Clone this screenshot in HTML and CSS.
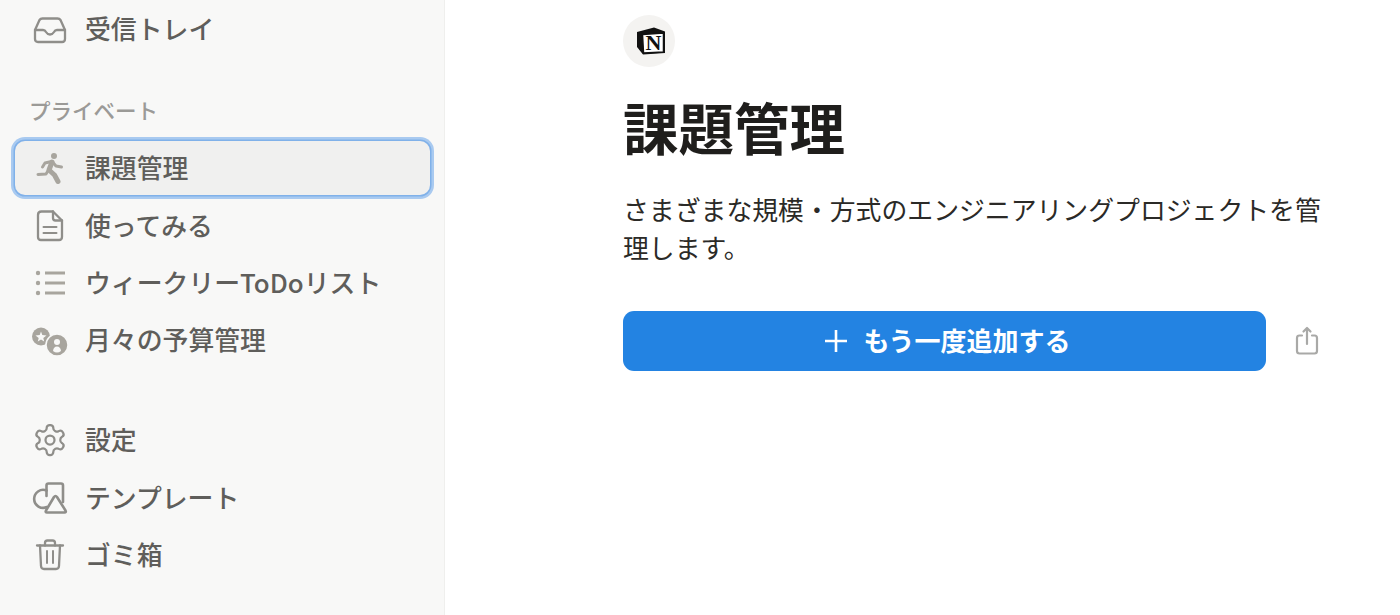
FILE: index.html
```html
<!DOCTYPE html>
<html lang="ja">

<head>
    <title>課題管理</title>
    <link rel="stylesheet" href="styles.css">
</head>

<body>
    <div class="page">
        <!-- Sidebar -->
        <aside class="sidebar">
            <a class="row">
                <svg class="icon" viewBox="0 0 36 36">
                    <path d="M3 19 L7.500 9 Q8.500 7.500 10.500 7.500 H25.500 Q27.500 7.500 28.500 9 L33 19 V28 Q33 31 30 31 H6 Q3 31 3 28 Z" />
                    <path d="M3 19 H11 Q13 19 14 21 Q15.500 23.500 18 23.500 Q20.500 23.500 22 21 Q23 19 25 19 H33" />
                </svg>
                <span>受信トレイ</span>
            </a>

            <div class="section-label">プライベート</div>

            <a class="row row-active">
                <svg class="icon icon-soft" viewBox="0 0 36 36">
                    <circle class="fill" cx="22" cy="6" r="3" />
                    <path class="thick" d="M20 12 L17 20 L22.500 25 L26 31.500" />
                    <path class="thin" d="M19.500 11.500 L13 13 L10.500 17" />
                    <path class="thin" d="M20.500 12 L24 16 L29.500 17" />
                    <path class="thin" d="M16.500 20 L14 24 L6 24.500" />
                </svg>
                <span>課題管理</span>
            </a>
            <a class="row">
                <svg class="icon" viewBox="0 0 36 36">
                    <path d="M6 7 Q6 3.500 9.500 3.500 H21 L30 12.500 V29 Q30 32 27 32 H9 Q6 32 6 29 Z" />
                    <path d="M21 3.500 V10 Q21 12.500 23.500 12.500 H30" />
                    <path class="line" d="M11.500 19 H24.500 M11.500 25 H24.500" />
                </svg>
                <span>使ってみる</span>
            </a>
            <a class="row">
                <svg class="icon icon-soft" viewBox="0 0 36 36">
                    <path class="list" d="M13 8 H33 M13 18 H33 M13 28 H33" />
                    <circle class="fill" cx="6" cy="8" r="2.200" />
                    <circle class="fill" cx="6" cy="18" r="2.200" />
                    <circle class="fill" cx="6" cy="28" r="2.200" />
                </svg>
                <span>ウィークリーToDoリスト</span>
            </a>
            <a class="row">
                <svg class="icon icon-soft" viewBox="0 0 36 36">
                    <circle class="fill" cx="9" cy="14.500" r="9" />
                    <path class="cut" d="M9 9.500 L10.300 13 L14.500 13.500 L11.300 16 L12.200 19.500 L9 17.500 L5.800 19.500 L6.700 16 L3.500 13.500 L7.700 13 Z" />
                    <circle class="fill ring" cx="25" cy="23" r="11" />
                    <circle class="cut" cx="25" cy="20" r="3" />
                    <path class="cut" d="M21 29 Q21.500 24.500 25 24.500 Q28.500 24.500 29 29 Q27 30.500 25 30.500 Q23 30.500 21 29 Z" />
                </svg>
                <span>月々の予算管理</span>
            </a>

            <div class="bottom-group">
                <a class="row">
                    <svg class="icon" viewBox="0 0 24 24">
                        <path class="gear" d="M12.220 2h-.44a2 2 0 0 0-2 2v.18a2 2 0 0 1-1 1.730l-.43.25a2 2 0 0 1-2 0l-.15-.08a2 2 0 0 0-2.730.73l-.22.38a2 2 0 0 0 .73 2.730l.15.1a2 2 0 0 1 1 1.720v.51a2 2 0 0 1-1 1.740l-.15.09a2 2 0 0 0-.73 2.730l.22.38a2 2 0 0 0 2.730.73l.15-.08a2 2 0 0 1 2 0l.43.25a2 2 0 0 1 1 1.730V20a2 2 0 0 0 2 2h.44a2 2 0 0 0 2-2v-.18a2 2 0 0 1 1-1.730l.43-.25a2 2 0 0 1 2 0l.15.08a2 2 0 0 0 2.730-.73l.22-.39a2 2 0 0 0-.73-2.730l-.15-.08a2 2 0 0 1-1-1.740v-.5a2 2 0 0 1 1-1.740l.15-.09a2 2 0 0 0 .73-2.730l-.22-.38a2 2 0 0 0-2.730-.73l-.15.08a2 2 0 0 1-2 0l-.43-.25a2 2 0 0 1-1-1.730V4a2 2 0 0 0-2-2z" />
                        <circle class="gear" cx="12" cy="12" r="3" />
                    </svg>
                    <span>設定</span>
                </a>
                <a class="row">
                    <svg class="icon" viewBox="0 0 36 36">
                        <path class="heavy" d="M14.500 10.500 A9 9 0 1 0 15 27" />
                        <path class="heavy" d="M14.500 16 V5.500 Q14.500 3.500 16.500 3.500 H29 Q31 3.500 31 5.500 V22" />
                        <path class="heavy" d="M15 32.500 Q13 32.500 14 30.500 L22 17 Q23.500 15 25 17 L33.500 30.500 Q34.500 32.500 32.500 32.500 Z" />
                    </svg>
                    <span>テンプレート</span>
                </a>
                <a class="row">
                    <svg class="icon" viewBox="0 0 36 36">
                        <path d="M5 8.500 H31" />
                        <path d="M13 8.500 V6 Q13 3.500 15.500 3.500 H20.500 Q23 3.500 23 6 V8.500" />
                        <path d="M8 8.500 L9 29 Q9.200 32 12 32 H24 Q26.800 32 27 29 L28 8.500" />
                        <path class="line" d="M15 14 V26 M21 14 V26" />
                    </svg>
                    <span>ゴミ箱</span>
                </a>
            </div>
        </aside>

        <!-- Template detail -->
        <main class="content">
            <div class="logo">
                <svg viewBox="0 0 34 30" width="34" height="30">
                    <path class="logo-back" d="M5 6 L22 1.500 L33 5.500 V27 L11 28.500 L5 21 Z" />
                    <path class="logo-front" d="M10.500 8.500 L31.500 7 V26 L11.500 27 Z" />
                    <text class="logo-letter" x="21.500" y="24" text-anchor="middle">N</text>
                </svg>
            </div>
            <h1>課題管理</h1>
            <p class="description">さまざまな規模・方式のエンジニアリングプロジェクトを管理します。</p>
            <div class="actions">
                <button class="add-button">
                    <svg viewBox="0 0 24 24" width="24" height="24">
                        <path d="M12 1 V23 M1 12 H23" />
                    </svg>
                    <span>もう一度追加する</span>
                </button>
                <svg class="share" viewBox="0 0 28 32" width="28" height="32">
                    <path d="M9 10.500 H6.500 Q4 10.500 4 13 V26 Q4 28.500 6.500 28.500 H21.500 Q24 28.500 24 26 V13 Q24 10.500 21.500 10.500 H19" />
                    <path d="M14 19 V3.500 M10.500 6.500 L14 3 L17.500 6.500" />
                </svg>
            </div>
        </main>
    </div>
</body>

</html>
```

FILE: styles.css
```css
* {
    box-sizing: border-box;
}

html,
body {
    margin: 0;
    height: 100%;
    overflow: hidden;
    background-color: #fff;
}

body {
    font-family: "Noto Sans CJK JP", "Liberation Sans", sans-serif;
    color: #1f1e1c;
}

.page {
    display: flex;
    height: 615px;
}

/* Sidebar */
.sidebar {
    width: 445px;
    flex-shrink: 0;
    padding: 0 13px 0 14px;
    background-color: #f8f8f7;
    border-right: 1px solid #efefed;
}

.row {
    display: flex;
    align-items: center;
    gap: 17px;
    height: 57.300px;
    padding-left: 18px;
    font-size: 25.850px;
    font-weight: 500;
    color: #5f5e5b;
    white-space: nowrap;
}

.row span {
    padding-bottom: 3px;
}

.row-active {
    height: 54px;
    margin: 1.650px 1.500px 1.650px 1px;
    padding-left: 17px;
    background-color: #f0f0ef;
    border-radius: 10px;
    box-shadow: 0 0 0 1.500px #80b1e9, 0 0 0 4px #a9caf0;
}

.section-label {
    display: flex;
    align-items: center;
    height: 28px;
    margin: 38px 0 18px 15px;
    font-size: 21.500px;
    font-weight: 500;
    color: #9b9a97;
}

.bottom-group {
    margin-top: 43px;
}

/* Sidebar icons */
.icon {
    width: 36px;
    height: 36px;
    flex-shrink: 0;
    fill: none;
    stroke: #8f8e8a;
    stroke-width: 2.300;
    stroke-linecap: round;
    stroke-linejoin: round;
}

.icon .gear {
    stroke-width: 1.500;
}

.icon .line {
    stroke-width: 2;
}

.icon .heavy {
    stroke-width: 2.600;
}

.icon-soft {
    stroke: #a8a59e;
}

.icon .fill {
    fill: #a8a59e;
    stroke: none;
}

.icon .ring {
    stroke: #f8f8f7;
    stroke-width: 1.500;
}

.icon .cut {
    fill: #f8f8f7;
    stroke: none;
}

.icon .thick {
    stroke-width: 5;
}

.icon .thin {
    stroke-width: 3;
}

.icon .list {
    stroke-width: 3.200;
    stroke-linecap: butt;
}

/* Main content */
.content {
    width: 700px;
    margin-left: 178px;
    padding-top: 15px;
}

.logo {
    display: flex;
    align-items: center;
    justify-content: center;
    width: 52px;
    height: 52px;
    border-radius: 50%;
    background-color: #f4f3f1;
}

.logo-back {
    fill: #111;
}

.logo-front {
    fill: #fff;
    stroke: #111;
    stroke-width: 1.500;
}

.logo-letter {
    font-family: "Liberation Serif", serif;
    font-size: 22px;
    font-weight: bold;
    fill: #111;
}

h1 {
    margin: 20px 0 0;
    font-size: 55.500px;
    font-weight: 700;
    line-height: 78px;
}

.description {
    width: 700px;
    margin: 25px 0 0;
    font-size: 25.850px;
    line-height: 38px;
    color: #2b2a27;
}

.actions {
    display: flex;
    align-items: center;
    margin-top: 45px;
}

.add-button {
    display: flex;
    align-items: center;
    justify-content: center;
    gap: 15px;
    width: 643px;
    height: 59.500px;
    padding: 0 0 0 6px;
    border: 0;
    border-radius: 11px;
    background-color: #2383e2;
    color: #fff;
    font: inherit;
    font-size: 26px;
    font-weight: 700;
}

.add-button span {
    padding-bottom: 3px;
}

.add-button svg {
    fill: none;
    stroke: #fff;
    stroke-width: 2.600;
}

.share {
    margin-left: 27px;
    fill: none;
    stroke: #a9a9a7;
    stroke-width: 2.200;
    stroke-linecap: round;
    stroke-linejoin: round;
}
```
